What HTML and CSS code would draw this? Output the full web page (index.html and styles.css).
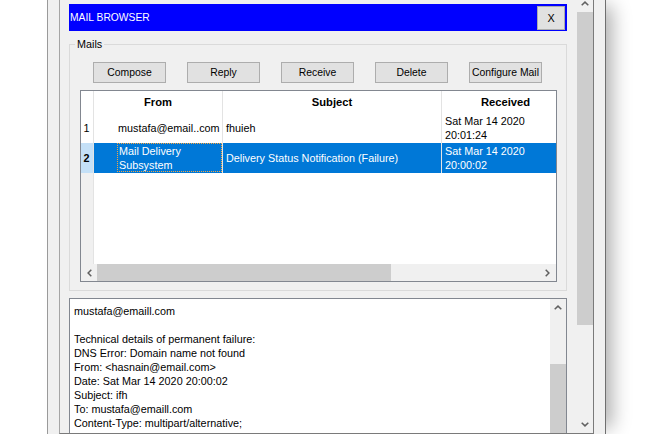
FILE: index.html
```html
<!DOCTYPE html>
<html>
<head>
<meta charset="utf-8">
<title>Mail Browser</title>
<link rel="stylesheet" href="styles.css">
</head>
<body>
<div class="frame">
  <div class="pane">
    <div class="viewport">
      <div class="titlebar">
        <span class="title">MAIL BROWSER</span>
        <button class="close">X</button>
      </div>
      <fieldset class="group">
        <legend>Mails</legend>
        <div class="toolbar">
          <button class="btn">Compose</button>
          <button class="btn">Reply</button>
          <button class="btn">Receive</button>
          <button class="btn">Delete</button>
          <button class="btn">Configure Mail</button>
        </div>
        <div class="table">
          <div class="tview">
            <div class="rowhdr">
              <div class="rh-head"></div>
              <div class="rh-cell">1</div>
              <div class="rh-cell sel">2</div>
              <div class="rh-fill"></div>
            </div>
            <div class="grid">
              <div class="row head">
                <div class="cell c-from">From</div>
                <div class="cell c-subj">Subject</div>
                <div class="cell c-recv">Received</div>
              </div>
              <div class="row">
                <div class="cell c-from">mustafa@email..com</div>
                <div class="cell c-subj">fhuieh</div>
                <div class="cell c-recv"><span>Sat Mar 14 2020</span><span>20:01:24</span></div>
              </div>
              <div class="row sel">
                <div class="cell c-from focused"><div class="focus"><span>Mail Delivery</span><span>Subsystem</span></div></div>
                <div class="cell c-subj">Delivery Status Notification (Failure)</div>
                <div class="cell c-recv"><span>Sat Mar 14 2020</span><span>20:00:02</span></div>
              </div>
            </div>
          </div>
          <div class="hscroll">
            <div class="hbtn">
              <svg width="5" height="8" viewBox="0 0 5 8"><path d="M4.3 0.7 L1.1 4 L4.3 7.3" fill="none" stroke="#606060" stroke-width="1.5"/></svg>
            </div>
            <div class="hthumb"></div>
            <div class="htrack"></div>
            <div class="hbtn r">
              <svg width="5" height="8" viewBox="0 0 5 8"><path d="M0.7 0.7 L3.9 4 L0.7 7.3" fill="none" stroke="#606060" stroke-width="1.5"/></svg>
            </div>
          </div>
        </div>
      </fieldset>
      <div class="textarea">
        <div class="text">
          <div>mustafa@emaill.com</div>
          <div>&nbsp;</div>
          <div>Technical details of permanent failure:</div>
          <div>DNS Error: Domain name not found</div>
          <div>From: &lt;hasnain@email.com&gt;</div>
          <div>Date: Sat Mar 14 2020 20:00:02</div>
          <div>Subject: ifh</div>
          <div>To: mustafa@emaill.com</div>
          <div>Content-Type: multipart/alternative;</div>
        </div>
        <div class="vscroll small">
          <div class="vbtn">
            <svg width="8" height="5" viewBox="0 0 8 5"><path d="M0.7 4.3 L4 1.1 L7.3 4.3" fill="none" stroke="#606060" stroke-width="1.5"/></svg>
          </div>
          <div class="vtrack-top"></div>
          <div class="vthumb"></div>
        </div>
      </div>
    </div>
    <div class="vscroll outer">
      <div class="vbtn up">
        <svg width="8" height="5" viewBox="0 0 8 5"><path d="M0.7 4.3 L4 1.1 L7.3 4.3" fill="none" stroke="#606060" stroke-width="1.5"/></svg>
      </div>
      <div class="vthumb"></div>
      <div class="vtrack"></div>
      <div class="vbtn down">
        <svg width="8" height="5" viewBox="0 0 8 5"><path d="M0.7 0.7 L4 3.9 L7.3 0.7" fill="none" stroke="#606060" stroke-width="1.5"/></svg>
      </div>
    </div>
  </div>
</div>
</body>
</html>
```

FILE: styles.css
```css
* { box-sizing: border-box; }
html, body { margin: 0; padding: 0; }
body {
  width: 666px;
  height: 434px;
  overflow: hidden;
  background: #fff;
  font-family: "Liberation Sans", Arial, sans-serif;
  font-size: 10.8px;
  line-height: 14px;
  color: #000;
}
.frame {
  margin-left: 47px;
  width: 559px;
  height: 434px;
  padding: 0 11px;
  background: #f0f0f0;
  border-left: 1px solid #9a9a9a;
  border-right: 1px solid #6f6f6f;
  box-shadow: 12px 0 18px -6px rgba(0, 0, 0, 0.32);
}
.pane {
  display: flex;
  height: 434px;
  border-left: 1px solid #a5a5a5;
  border-right: 1px solid #7a7a7a;
  border-bottom: 1px solid #7a7a7a;
}
.viewport {
  width: 516px;
  height: 433px;
  overflow: hidden;
  padding: 4px 9px 0;
}
.titlebar {
  display: flex;
  align-items: center;
  justify-content: space-between;
  height: 27px;
  padding: 0 2px 0 1px;
  background: #0000ff;
}
.title {
  color: #fff;
  font-family: "Liberation Sans Narrow", "Liberation Sans", sans-serif;
  font-size: 10.3px;
}
.close {
  width: 28px;
  height: 24px;
  padding: 0;
  border: 1px solid #adadad;
  background: #e1e1e1;
  font-family: "Liberation Sans", Arial, sans-serif;
  font-size: 10.8px;
  color: #000;
}
.group {
  margin: 6px 0 0;
  padding: 11px 9px 8px 10px;
  border: 1px solid #dadada;
  min-width: 0;
}
.group legend {
  margin-left: -5px;
  padding: 0 2px;
  line-height: 14px;
}
.toolbar {
  display: flex;
  gap: 21px;
  padding-left: 13px;
}
.btn {
  width: 73px;
  height: 21px;
  padding: 0 0 1px;
  border: 1px solid #adadad;
  background: #e1e1e1;
  font-family: "Liberation Sans", Arial, sans-serif;
  font-size: 10.4px;
  color: #000;
}
.table {
  margin-top: 7px;
  height: 192px;
  border: 1px solid #828790;
  background: #fff;
}
.tview {
  display: flex;
  height: 173px;
  overflow: hidden;
}
.rowhdr {
  width: 13px;
  flex: none;
  display: flex;
  flex-direction: column;
  border-right: 1px solid #e3e3e3;
}
.rh-head { height: 22px; flex: none; }
.rh-cell {
  height: 30px;
  flex: none;
  display: flex;
  align-items: center;
  justify-content: center;
  padding-right: 1px;
}
.rh-cell.sel { background: #c4e0f7; font-weight: bold; }
.rh-fill { flex: 1; background: #f0f0f0; }
.grid { flex: 1; min-width: 0; overflow: hidden; }
.row { display: flex; height: 30px; }
.row.head { height: 22px; font-weight: bold; font-size: 11.2px; }
.cell {
  flex: none;
  display: flex;
  flex-direction: column;
  justify-content: center;
  padding-left: 3px;
  border-right: 1px solid #e3e3e3;
  white-space: nowrap;
}
.row.head .cell { align-items: center; padding-left: 0; }
.c-from { width: 129px; }
.c-subj { width: 219px; }
.c-recv { width: 128px; }
.row .c-from { padding-left: 24px; }
.row.head .c-from { padding-left: 0; }
.row.sel { background: #0078d7; color: #fff; }
.row .c-from.focused { padding-left: 23px; justify-content: flex-start; }
.focus {
  height: 29px;
  display: flex;
  flex-direction: column;
  justify-content: center;
  padding-left: 1px;
  border: 1px dotted #f8a640;
}
.hscroll { display: flex; height: 17px; background: #f0f0f0; }
.hbtn {
  width: 16px;
  flex: none;
  display: flex;
  align-items: center;
  justify-content: center;
}
.hbtn.r { width: 17px; }
.hthumb { width: 294px; flex: none; background: #cdcdcd; }
.htrack { flex: 1; }
.textarea {
  display: flex;
  margin-top: 7px;
  height: 200px;
  border: 1px solid #828790;
  background: #fff;
}
.text { flex: 1; padding: 5px 0 0 4px; }
.vscroll {
  display: flex;
  flex-direction: column;
  flex: none;
  background: #f0f0f0;
}
.vbtn {
  height: 17px;
  flex: none;
  display: flex;
  align-items: center;
  justify-content: center;
}
.vscroll.small { width: 16px; }
.small .vtrack-top { height: 48px; flex: none; }
.small .vthumb { height: 200px; flex: none; background: #cdcdcd; }
.vscroll.outer { width: 17px; height: 433px; padding-left: 1px; }
.outer .vbtn.up { height: 12px; align-items: flex-start; padding-top: 1px; }
.outer .vthumb { height: 313px; flex: none; background: #cdcdcd; }
.outer .vtrack { flex: 1; }
```
